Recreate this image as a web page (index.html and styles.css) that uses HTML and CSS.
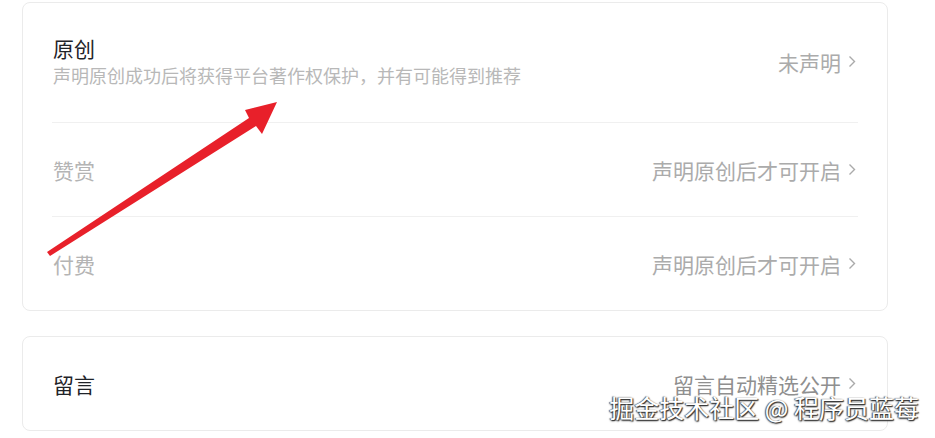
FILE: index.html
```html
<!DOCTYPE html>
<html lang="zh">
<head>
<meta charset="utf-8">
<link rel="stylesheet" href="styles.css">
</head>
<body>
<div class="page">
  <section class="card">
    <div class="row row-main">
      <div class="label">
        <div class="title">原创</div>
        <div class="desc">声明原创成功后将获得平台著作权保护，并有可能得到推荐</div>
      </div>
      <div class="value">未声明<svg class="chev" viewBox="0 0 8 13"><path d="M1.5 1.5 L6.5 6.5 L1.5 11.5"/></svg></div>
    </div>
    <div class="divider"></div>
    <div class="row">
      <div class="title disabled">赞赏</div>
      <div class="value">声明原创后才可开启<svg class="chev" viewBox="0 0 8 13"><path d="M1.5 1.5 L6.5 6.5 L1.5 11.5"/></svg></div>
    </div>
    <div class="divider"></div>
    <div class="row">
      <div class="title disabled">付费</div>
      <div class="value">声明原创后才可开启<svg class="chev" viewBox="0 0 8 13"><path d="M1.5 1.5 L6.5 6.5 L1.5 11.5"/></svg></div>
    </div>
  </section>
  <section class="card card-second">
    <div class="row">
      <div class="title">留言</div>
      <div class="value value-dark">留言自动精选公开<svg class="chev" viewBox="0 0 8 13"><path d="M1.5 1.5 L6.5 6.5 L1.5 11.5"/></svg></div>
    </div>
  </section>
</div>
<svg class="arrow" viewBox="0 0 935 438" width="935" height="438">
  <polygon points="47,252 249,118 245,110 277,102 262,134 256,126 50,256" fill="#e8202a"/>
</svg>
<div class="watermark">掘金技术社区 @ 程序员蓝莓</div>
</body>
</html>
```

FILE: styles.css
```css
html, body {
  margin: 0;
  padding: 0;
  background: #ffffff;
}
body {
  font-family: "Noto Sans CJK SC", "Noto Sans", sans-serif;
  position: relative;
  width: 935px;
  height: 438px;
  overflow: hidden;
}
.page {
  padding: 2px 47px 0 22px;
}
.card {
  border: 1px solid #ebebeb;
  border-radius: 8px;
  padding: 0 31px 0 29px;
  background: #fff;
}
.card-second {
  margin-top: 25px;
}
.row {
  height: 93px;
  display: flex;
  align-items: center;
  justify-content: space-between;
}
.row-main {
  height: 117px;
  padding-bottom: 2px;
}
.label {
  display: flex;
  flex-direction: column;
}
.title {
  font-size: 21px;
  line-height: 28px;
  color: #1f2329;
  padding-left: 1px;
}
.title.disabled {
  color: #b4b4b4;
}
.desc {
  font-size: 18px;
  line-height: 27px;
  color: #b8b8b8;
  padding-left: 1px;
}
.divider {
  height: 1px;
  background: #f0f0f0;
  margin-right: -2px;
}
.value {
  display: flex;
  align-items: center;
  font-size: 21px;
  line-height: 28px;
  color: #ababab;
}
.value-dark {
  color: #8f8f8f;
}
.chev {
  width: 8px;
  height: 13px;
  margin-left: 7px;
  fill: none;
  stroke: #aaaaaa;
  stroke-width: 1.4;
}
.arrow {
  position: absolute;
  left: 0;
  top: 0;
  pointer-events: none;
}
.watermark {
  position: absolute;
  right: 16px;
  top: 390px;
  font-size: 25px;
  line-height: 34px;
  color: #ffffff;
  text-shadow: 1px 1px 1px #333, -1px 0 1px #555, 0 1px 2px #444;
}
```
